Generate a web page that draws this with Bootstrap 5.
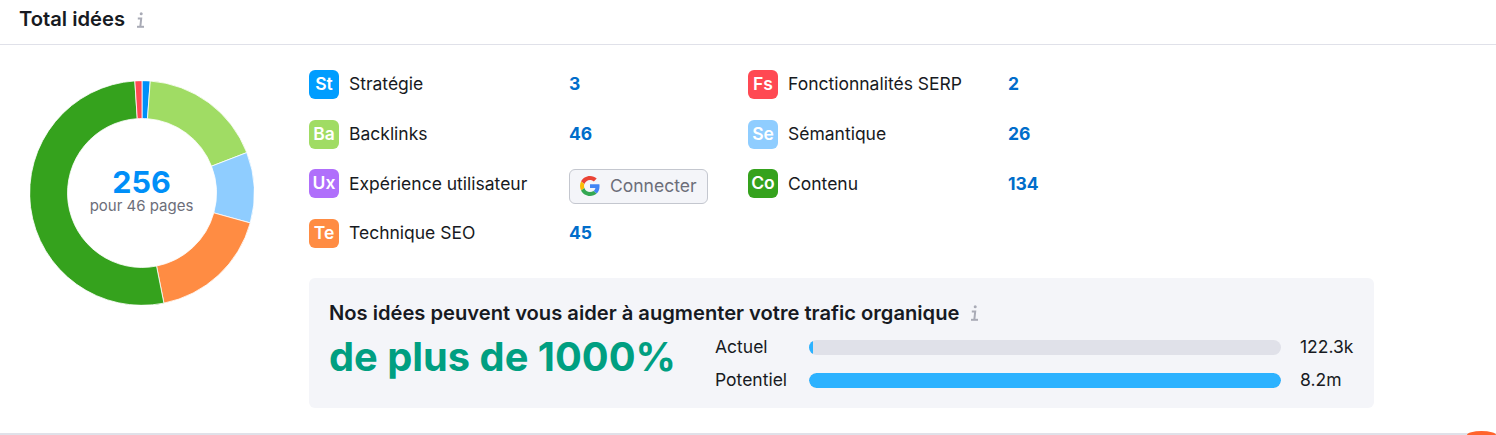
<!DOCTYPE html>
<html lang="fr">
<head>
  <meta charset="UTF-8" />
  <meta name="viewport" content="width=device-width, initial-scale=1.0" />
  <title>Total idées</title>
  <link href="https://cdn.jsdelivr.net/npm/bootstrap@5.3.0/dist/css/bootstrap.min.css" rel="stylesheet" />
  <style>
    html, body {
      height: 435px;
      overflow: hidden;
    }
    body {
      background: #fff;
      color: #171a22;
      font-family: Inter, "Liberation Sans", sans-serif;
      font-size: 17.5px;
      position: relative;
    }
    .top-bar {
      height: 45px;
      padding: 0 19px 5px;
      border-bottom: 1px solid #e0e1e9;
      gap: 11px;
    }
    .top-title {
      font-size: 20.2px;
      font-weight: 600;
      margin: 0;
    }
    .info-i {
      width: 9px;
      height: 16px;
      flex: none;
    }
    .main-area {
      height: 390px;
      border-bottom: 2px solid #e0e1e9;
    }
    .donut-box {
      width: 309px;
      flex: none;
      padding: 35.5px 0 0 29.5px;
    }
    .donut {
      width: 224px;
      height: 224px;
      position: relative;
    }
    .donut-label {
      position: absolute;
      inset: 0;
      padding-bottom: 4px;
    }
    .donut-total {
      color: #008ff8;
      font-size: 30.5px;
      font-weight: 700;
      line-height: 30px;
    }
    .donut-sub {
      color: #6c6e79;
      font-size: 15px;
      line-height: 17px;
    }
    .right-col {
      width: 1065px;
      padding-top: 25px;
    }
    .idea-grid {
      display: grid;
      grid-template-columns: 439px 439px;
      grid-auto-rows: 49.67px;
      width: 878px;
    }
    .idea-row {
      height: 29px;
    }
    .idea-tag {
      width: 30px;
      height: 29px;
      border-radius: 6px;
      color: #fff;
      font-size: 17.5px;
      font-weight: 600;
      line-height: 27px;
      text-align: center;
      flex: none;
    }
    .idea-name {
      width: 220px;
      margin-left: 10px;
      flex: none;
    }
    .idea-count {
      color: #006dca;
      font-weight: 700;
    }
    .tag-st { background: #009dff; }
    .tag-ba { background: #a0dc64; }
    .tag-ux { background: #b06ffb; }
    .tag-te { background: #ff8c43; }
    .tag-fs { background: #ff4953; }
    .tag-se { background: #8fcdff; }
    .tag-co { background: #35a21d; }
    .btn.connect-btn {
      width: 139px;
      height: 35px;
      margin-top: 6px;
      padding: 0 0 2px 10px;
      background: #f4f5f9;
      border: 1px solid #c4c7cf;
      border-radius: 6px;
      color: #6c6e79;
      font-size: 17.5px;
      line-height: 1;
      gap: 10px;
      flex: none;
    }
    .gain-panel {
      height: 130px;
      margin-top: 9px;
      padding: 22px 20px 0;
      background: #f4f5f9;
      border-radius: 6px;
    }
    .gain-head {
      gap: 11px;
    }
    .gain-title {
      font-size: 20.15px;
      font-weight: 600;
      line-height: 26px;
      margin: 0;
    }
    .gain-big {
      color: #009f81;
      font-size: 39.8px;
      font-weight: 700;
      line-height: 50px;
      width: 386px;
      margin-top: 6px;
      flex: none;
    }
    .bar-group {
      margin-top: 5px;
    }
    .bar-row {
      height: 33px;
    }
    .bar-name {
      width: 94px;
      flex: none;
    }
    .bar-track {
      width: 472px;
      height: 15px;
      background: #e0e1e9;
      border-radius: 8px;
      overflow: hidden;
      flex: none;
    }
    .bar-fill {
      height: 100%;
      background: #2cb2ff;
      border-radius: 8px;
    }
    .bar-value {
      margin-left: 19px;
    }
    .corner-dot {
      position: absolute;
      left: 1467px;
      top: 431px;
      width: 29px;
      height: 4px;
      border-radius: 50% 50% 0 0 / 100% 100% 0 0;
      background: #ff642d;
    }
  </style>
</head>
<body>
  <div class="top-bar d-flex align-items-center">
    <h2 class="top-title">Total idées</h2>
    <svg class="info-i" viewBox="0 0 9 16" fill="none" stroke="#a9abb6" stroke-width="2">
      <circle cx="5.2" cy="1.8" r="1.5" fill="#a9abb6" stroke="none"/>
      <path d="M1.800 6.500h3.400L4.400 14"/>
      <path d="M1 14.800h7"/>
    </svg>
  </div>

  <div class="main-area d-flex">
    <div class="donut-box">
      <div class="donut">
        <svg id="donutChart" width="224" height="224" viewBox="0 0 224 224"></svg>
        <div class="donut-label d-flex flex-column align-items-center justify-content-center text-center">
          <div class="donut-total">256</div>
          <div class="donut-sub">pour 46 pages</div>
        </div>
      </div>
    </div>

    <div class="right-col">
      <div class="idea-grid">
        <div class="idea-row d-flex align-items-center">
          <div class="idea-tag tag-st">St</div><div class="idea-name">Stratégie</div><div class="idea-count">3</div>
        </div>
        <div class="idea-row d-flex align-items-center">
          <div class="idea-tag tag-fs">Fs</div><div class="idea-name">Fonctionnalités SERP</div><div class="idea-count">2</div>
        </div>
        <div class="idea-row d-flex align-items-center">
          <div class="idea-tag tag-ba">Ba</div><div class="idea-name">Backlinks</div><div class="idea-count">46</div>
        </div>
        <div class="idea-row d-flex align-items-center">
          <div class="idea-tag tag-se">Se</div><div class="idea-name">Sémantique</div><div class="idea-count">26</div>
        </div>
        <div class="idea-row d-flex align-items-center">
          <div class="idea-tag tag-ux">Ux</div><div class="idea-name">Expérience utilisateur</div>
          <button type="button" class="btn connect-btn d-flex align-items-center">
            <svg width="20" height="20" viewBox="0 0 48 48">
              <path fill="#EA4335" d="M24 9.500c3.500 0 6.700 1.200 9.200 3.600l6.900-6.900C35.900 2.400 30.500 0 24 0 14.600 0 6.500 5.400 2.600 13.200l8 6.200C12.500 13.700 17.800 9.500 24 9.500z"/>
              <path fill="#4285F4" d="M46.900 24.500c0-1.600-.1-3.100-.4-4.500H24v9h12.900c-.6 3-2.200 5.500-4.700 7.200l7.700 6c4.500-4.200 7-10.300 7-17.700z"/>
              <path fill="#FBBC05" d="M10.500 28.600c-.5-1.400-.8-3-.8-4.600s.3-3.200.8-4.600l-8-6.200C.9 16.500 0 20.100 0 24s.9 7.500 2.600 10.800l7.900-6.200z"/>
              <path fill="#34A853" d="M24 48c6.500 0 11.900-2.100 15.900-5.800l-7.700-6c-2.200 1.400-4.900 2.300-8.200 2.300-6.200 0-11.500-4.200-13.400-9.900l-8 6.200C6.500 42.600 14.600 48 24 48z"/>
            </svg>
            Connecter
          </button>
        </div>
        <div class="idea-row d-flex align-items-center">
          <div class="idea-tag tag-co">Co</div><div class="idea-name">Contenu</div><div class="idea-count">134</div>
        </div>
        <div class="idea-row d-flex align-items-center">
          <div class="idea-tag tag-te">Te</div><div class="idea-name">Technique SEO</div><div class="idea-count">45</div>
        </div>
      </div>

      <div class="gain-panel">
        <div class="gain-head d-flex align-items-center">
          <h3 class="gain-title">Nos idées peuvent vous aider à augmenter votre trafic organique</h3>
          <svg class="info-i" viewBox="0 0 9 16" fill="none" stroke="#a9abb6" stroke-width="2">
            <circle cx="5.2" cy="1.8" r="1.5" fill="#a9abb6" stroke="none"/>
            <path d="M1.800 6.500h3.400L4.400 14"/>
            <path d="M1 14.800h7"/>
          </svg>
        </div>
        <div class="d-flex align-items-start">
          <div class="gain-big">de plus de 1000%</div>
          <div class="bar-group">
            <div class="bar-row d-flex align-items-center">
              <div class="bar-name">Actuel</div>
              <div class="bar-track"><div class="bar-fill" style="width: 0.8%"></div></div>
              <div class="bar-value">122.3k</div>
            </div>
            <div class="bar-row d-flex align-items-center">
              <div class="bar-name">Potentiel</div>
              <div class="bar-track"><div class="bar-fill" style="width: 100%"></div></div>
              <div class="bar-value">8.2m</div>
            </div>
          </div>
        </div>
      </div>
    </div>
  </div>

  <div class="corner-dot"></div>

  <script src="https://cdn.jsdelivr.net/npm/bootstrap@5.3.0/dist/js/bootstrap.bundle.min.js"></script>
  <script>
    // parts of the donut, clockwise from 12 o'clock
    // the red one is drawn a bit wider than its value, same as the chart in the picture
    const parts = [
      [3, "#008ff8"], [46, "#a0dc64"], [26, "#8fcdff"],
      [45, "#ff8c43"], [133.4, "#35a21d"], [2.6, "#ff4953"]
    ];
    const total = 256, outer = 112.3, inner = 74.5, mid = 112;
    const chart = document.getElementById("donutChart");

    function pt(r, a) {
      return (mid + r * Math.sin(a)).toFixed(2) + " " + (mid - r * Math.cos(a)).toFixed(2);
    }

    let start = 0;
    let html = "";
    parts.forEach(([n, color]) => {
      const end = start + n / total * Math.PI * 2;
      const big = end - start > Math.PI ? 1 : 0;
      html += `<path fill="${color}" stroke="#fff" stroke-width="0.8" d="M${pt(outer, start)} A${outer} ${outer} 0 ${big} 1 ${pt(outer, end)} L${pt(inner, end)} A${inner} ${inner} 0 ${big} 0 ${pt(inner, start)} Z"/>`;
      start = end;
    });
    chart.innerHTML = html;
  </script>
</body>
</html>
